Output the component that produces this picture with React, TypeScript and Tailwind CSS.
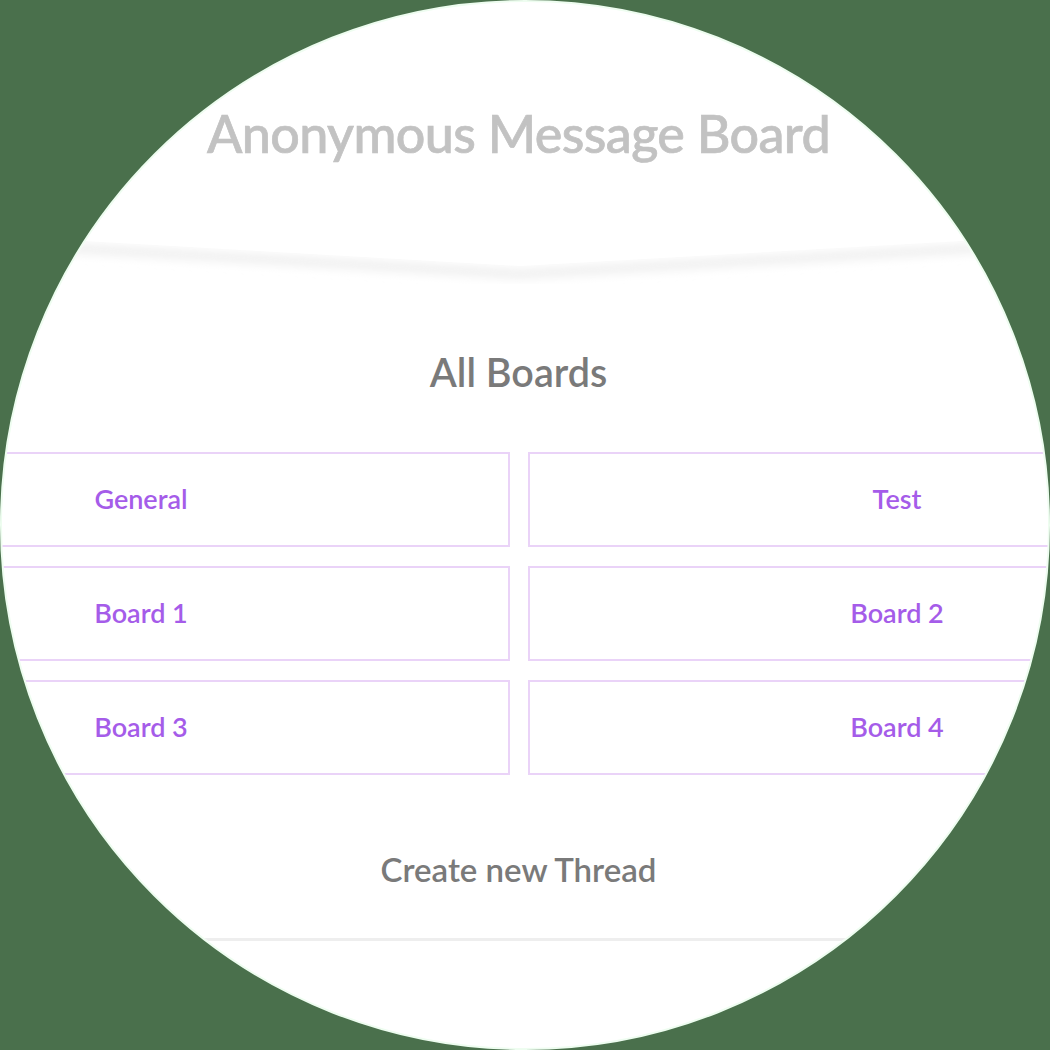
import React from "react";

const boards = ["General", "Test", "Board 1", "Board 2", "Board 3", "Board 4"];

export default function App() {
  return (
    <div className="w-[1050px] h-[1050px] bg-[#4a704c]">
      <div
        className="w-[1050px] h-[1050px] rounded-full overflow-hidden bg-white border-2 border-[#eefdf0] flex flex-col items-center pr-[13px]"
        style={{ fontFamily: "Lato, 'Open Sans', sans-serif" }}
      >
        {/* Header */}
        <h1 className="mt-[100px] text-[52px] leading-[62px] text-[#c2c2c2] font-medium tracking-[-0.6px] [-webkit-text-stroke:0.7px_#c2c2c2]">
          Anonymous Message Board
        </h1>

        {/* Header shadow */}
        <svg width="1050" height="60" viewBox="0 0 1050 60" className="mt-[60px] shrink-0 ml-[13px]">
          <defs>
            <filter id="soft" x="-10%" y="-100%" width="120%" height="300%">
              <feGaussianBlur stdDeviation="5" />
            </filter>
          </defs>
          <path d="M0 20 L520 50 L1050 20" fill="none" stroke="#f0f0f0" strokeWidth="10" filter="url(#soft)" />
          <path d="M0 12 L520 42 L1050 12 L1050 0 L0 0 Z" fill="#ffffff" />
        </svg>

        <h2 className="mt-[65px] text-[39.5px] leading-[46px] text-[#7a7a7a] font-semibold">
          All Boards
        </h2>

        {/* Boards grid */}
        <div className="w-full mt-[57px]">
          <div className="w-[1494px] ml-[-230px] grid grid-cols-2 gap-x-[18px] gap-y-[19px]">
            {boards.map((b) => (
              <div
                key={b}
                className="h-[95px] border-2 border-[#ead3f8] flex items-center justify-center text-[27px] font-semibold text-[#a55ce9]"
              >
                {b}
              </div>
            ))}
          </div>
        </div>

        <h3 className="mt-[74px] text-[33px] leading-[40px] text-[#7a7a7a] font-semibold">
          Create new Thread
        </h3>

        <div className="w-[1050px] ml-[13px] mt-[49px] h-[3px] bg-[#eeeeee] shrink-0" />
      </div>
    </div>
  );
}
